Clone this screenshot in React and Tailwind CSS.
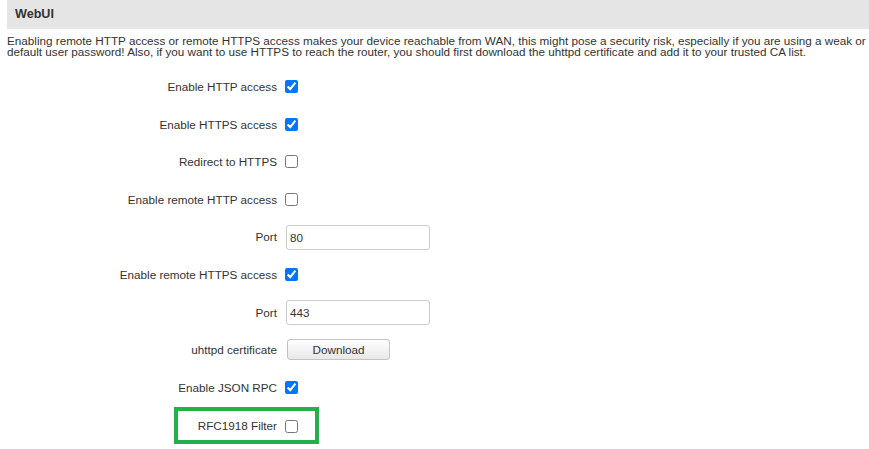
import React from "react";

const rows = [
  { label: "Enable HTTP access", type: "check", checked: true },
  { label: "Enable HTTPS access", type: "check", checked: true },
  { label: "Redirect to HTTPS", type: "check", checked: false },
  { label: "Enable remote HTTP access", type: "check", checked: false },
  { label: "Port", type: "input", value: "80" },
  { label: "Enable remote HTTPS access", type: "check", checked: true },
  { label: "Port", type: "input", value: "443" },
  { label: "uhttpd certificate", type: "button" },
  { label: "Enable JSON RPC", type: "check", checked: true },
];

function Control({ row }) {
  if (row.type === "check") {
    return <input type="checkbox" defaultChecked={row.checked} className="w-[13px] h-[13px] ml-[-1px]" />;
  }
  if (row.type === "input") {
    return (
      <input
        type="text"
        defaultValue={row.value}
        className="w-[144px] h-[25px] border border-[#ccc] rounded-[3px] px-[3px] text-[11.7px] text-[#333] bg-white outline-none"
      />
    );
  }
  return (
    <button className="w-[103px] h-[21px] ml-[1px] border border-[#c4c4c4] rounded-[3px] bg-gradient-to-b from-white to-[#e8e8e8] text-[11.7px] text-[#333] leading-none">
      Download
    </button>
  );
}

export default function App() {
  return (
    <div className="w-[869px] h-[449px] bg-white overflow-hidden text-[#333]" style={{ fontFamily: '"Liberation Sans", Arial, sans-serif' }}>
      <div className="ml-[7px] h-[29px] bg-[#e5e5e5] flex items-center pl-[8px]">
        <span className="text-[12.6px] font-bold text-[#333]">WebUI</span>
      </div>
      <p className="ml-[7px] mt-[6px] w-[860px] text-[11.7px] leading-[11px] text-[#333]">
        Enabling remote HTTP access or remote HTTPS access makes your device reachable from WAN, this might pose a security risk, especially if you are using a weak or default user password! Also, if you want to use HTTPS to reach the router, you should first download the uhttpd certificate and add it to your trusted CA list.
      </p>
      <div className="mt-[11px] flex flex-col">
        {rows.map((row, i) => (
          <div key={i} className="h-[37.6px] flex items-center">
            <label className="w-[277px] text-right text-[11.7px] text-[#333]">{row.label}</label>
            <div className="ml-[9px] flex items-center">
              <Control row={row} />
            </div>
          </div>
        ))}
        <div className="h-[37.6px] flex items-center relative mt-[1px]">
          <div className="absolute left-[174px] top-[0px] w-[145px] h-[37px] border-[4px] border-[#21b04b]" />
          <label className="w-[277px] text-right text-[11.7px] text-[#333]">RFC1918 Filter</label>
          <div className="ml-[9px] flex items-center">
            <input type="checkbox" className="w-[13px] h-[13px] ml-[-1px]" />
          </div>
        </div>
      </div>
    </div>
  );
}
